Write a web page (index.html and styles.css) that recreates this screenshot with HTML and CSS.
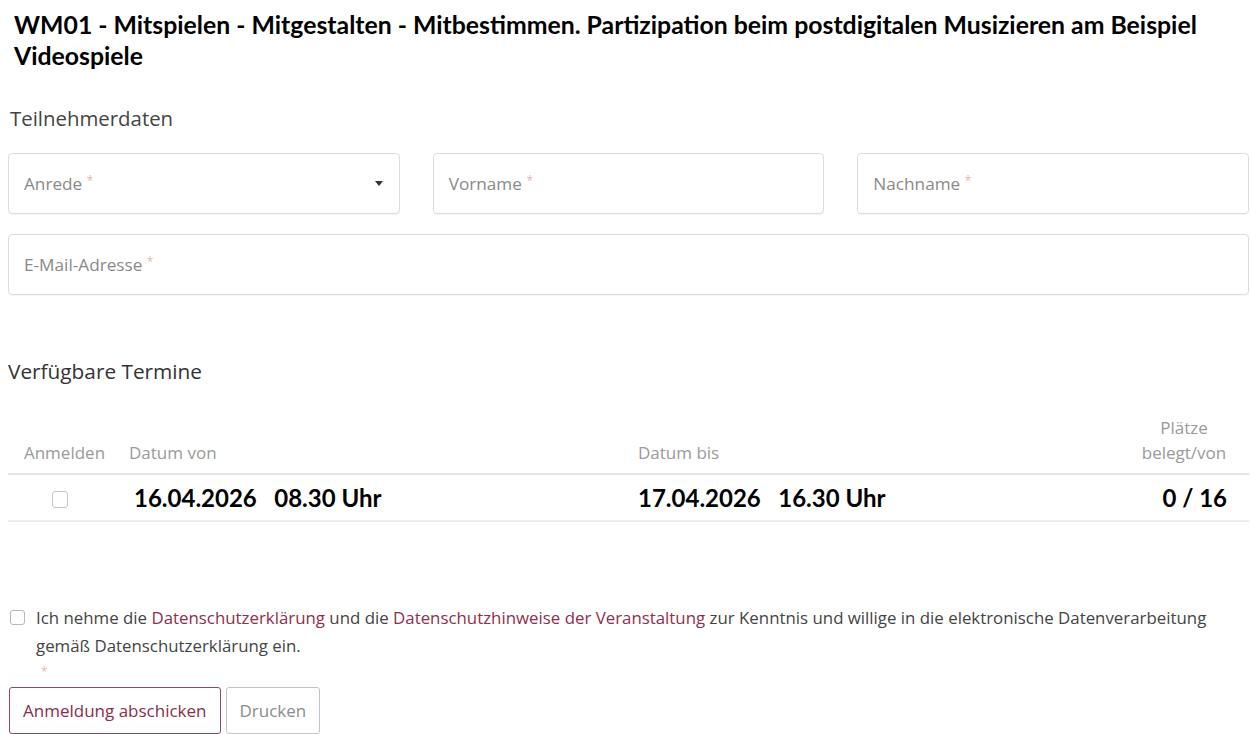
FILE: index.html
```html
<!DOCTYPE html>
<html lang="de">
<head>
<meta charset="utf-8">
<title>Anmeldung WM01</title>
<link rel="stylesheet" href="styles.css">
</head>
<body>
<div class="page">
  <h1 class="title">WM01 - Mitspielen - Mitgestalten - Mitbestimmen. Partizipation beim postdigitalen Musizieren am Beispiel Videospiele</h1>

  <h2 class="section">Teilnehmerdaten</h2>
  <div class="fields">
    <div class="field select">
      <span class="ph">Anrede <span class="req">*</span></span>
      <span class="caret"></span>
    </div>
    <div class="field"><span class="ph">Vorname <span class="req">*</span></span></div>
    <div class="field"><span class="ph">Nachname <span class="req">*</span></span></div>
    <div class="field wide"><span class="ph">E-Mail-Adresse <span class="req">*</span></span></div>
  </div>

  <h2 class="section termine">Verfügbare Termine</h2>
  <table class="dates">
    <colgroup>
      <col class="c1"><col class="c2"><col class="c3"><col class="c4">
    </colgroup>
    <thead>
      <tr>
        <th class="center">Anmelden</th>
        <th>Datum von</th>
        <th>Datum bis</th>
        <th class="center">Plätze<br>belegt/von</th>
      </tr>
    </thead>
    <tbody>
      <tr>
        <td class="center"><span class="box"></span></td>
        <td class="val first">16.04.2026   08.30 Uhr</td>
        <td class="val">17.04.2026   16.30 Uhr</td>
        <td class="val num">0 / 16</td>
      </tr>
    </tbody>
  </table>

  <div class="consent">
    <span class="box small"></span>
    <p>Ich nehme die <a href="#">Datenschutzerklärung</a> und die <a href="#">Datenschutzhinweise der Veranstaltung</a> zur Kenntnis und willige in die elektronische Datenverarbeitung gemäß Datenschutzerklärung ein.</p>
  </div>
  <div class="req-line"><span class="req">*</span></div>

  <div class="buttons">
    <button class="btn primary">Anmeldung abschicken</button>
    <button class="btn">Drucken</button>
  </div>
</div>
</body>
</html>
```

FILE: styles.css
```css
* { box-sizing: border-box; }

html, body {
  margin: 0;
  padding: 0;
  background: #ffffff;
}

body {
  font-family: "Open Sans", "Noto Sans", sans-serif;
  color: #444;
}

.page {
  padding: 0 1px 0 8px;
}

.title {
  margin: 0;
  padding: 9px 20px 0 6px;
  font-family: Lato, "Liberation Sans", sans-serif;
  font-weight: 700;
  font-size: 24.8px;
  line-height: 31px;
  color: #000;
}

.section {
  margin: 35px 0 0 2px;
  font-weight: 400;
  font-size: 20.4px;
  line-height: 24px;
  color: #444;
}

.section.termine {
  margin: 64px 0 0 0;
  font-size: 20.8px;
  color: #333;
}

.fields {
  display: grid;
  grid-template-columns: repeat(3, 1fr);
  column-gap: 33px;
  row-gap: 20px;
  margin-top: 23px;
}

.field {
  height: 61px;
  border: 1px solid #dcdcdc;
  border-radius: 4px;
  display: flex;
  align-items: center;
  justify-content: space-between;
  padding: 0 15px;
  box-shadow: 0 1px 1px rgba(0,0,0,0.04);
}

.field.wide {
  grid-column: 1 / -1;
}

.ph {
  font-size: 17.2px;
  color: #8a8a8a;
  margin-top: -1px;
}

.req {
  color: #e3b9a9;
  font-size: 12px;
  vertical-align: 5px;
}

.caret {
  width: 0;
  height: 0;
  border-left: 4px solid transparent;
  border-right: 4px solid transparent;
  border-top: 5px solid #333;
  margin-right: 1px;
}

.dates {
  width: 100%;
  table-layout: fixed;
  border-collapse: collapse;
  margin-top: 32px;
}

.dates .c1 { width: 113px; }
.dates .c2 { width: 509px; }
.dates .c4 { width: 120px; }

.dates th {
  font-weight: 400;
  font-size: 17px;
  line-height: 25px;
  color: #9a9a9a;
  text-align: left;
  vertical-align: bottom;
  padding: 0 8px 8px;
  border-bottom: 2px solid #e4e4e4;
}

.dates th:last-child {
  padding-right: 10px;
  padding-left: 0;
}

.dates .center {
  text-align: center;
}

.dates td {
  height: 47px;
  padding: 0 8px;
  border-bottom: 2px solid #ececec;
  vertical-align: middle;
}

.dates td.val {
  font-family: Lato, "Liberation Sans", sans-serif;
  font-weight: 700;
  font-size: 24px;
  color: #000;
  white-space: pre;
}

.dates td.first {
  padding-left: 13px;
}

.dates td.num {
  text-align: right;
  padding-right: 22px;
}

.box {
  display: inline-block;
  width: 16px;
  height: 17px;
  border: 1px solid #c6c6c6;
  border-radius: 3px;
  vertical-align: middle;
  margin-left: -10px;
}

.consent {
  display: flex;
  align-items: flex-start;
  margin-top: 82px;
}

.box.small {
  width: 15px;
  height: 15px;
  margin: 6px 0 0 2px;
  flex: none;
  border-color: #b8b8b8;
}

.consent p {
  margin: 0 0 0 11px;
  font-size: 16.85px;
  line-height: 28px;
  color: #444;
}

.consent a {
  color: #8f2f4c;
  text-decoration: none;
}

.req-line {
  padding-left: 33px;
  height: 22px;
  line-height: 24px;
}

.buttons {
  display: flex;
  gap: 5px;
  margin-top: 5px;
  padding-left: 1px;
}

.btn {
  font-family: "Open Sans", "Noto Sans", sans-serif;
  font-size: 17px;
  height: 47px;
  padding: 0 13px;
  background: #fff;
  border: 1px solid #c4c4c4;
  border-radius: 3px;
  color: #8c8c8c;
}

.btn.primary {
  border: 1.5px solid #8e4a5c;
  color: #8a2e4a;
}
```
